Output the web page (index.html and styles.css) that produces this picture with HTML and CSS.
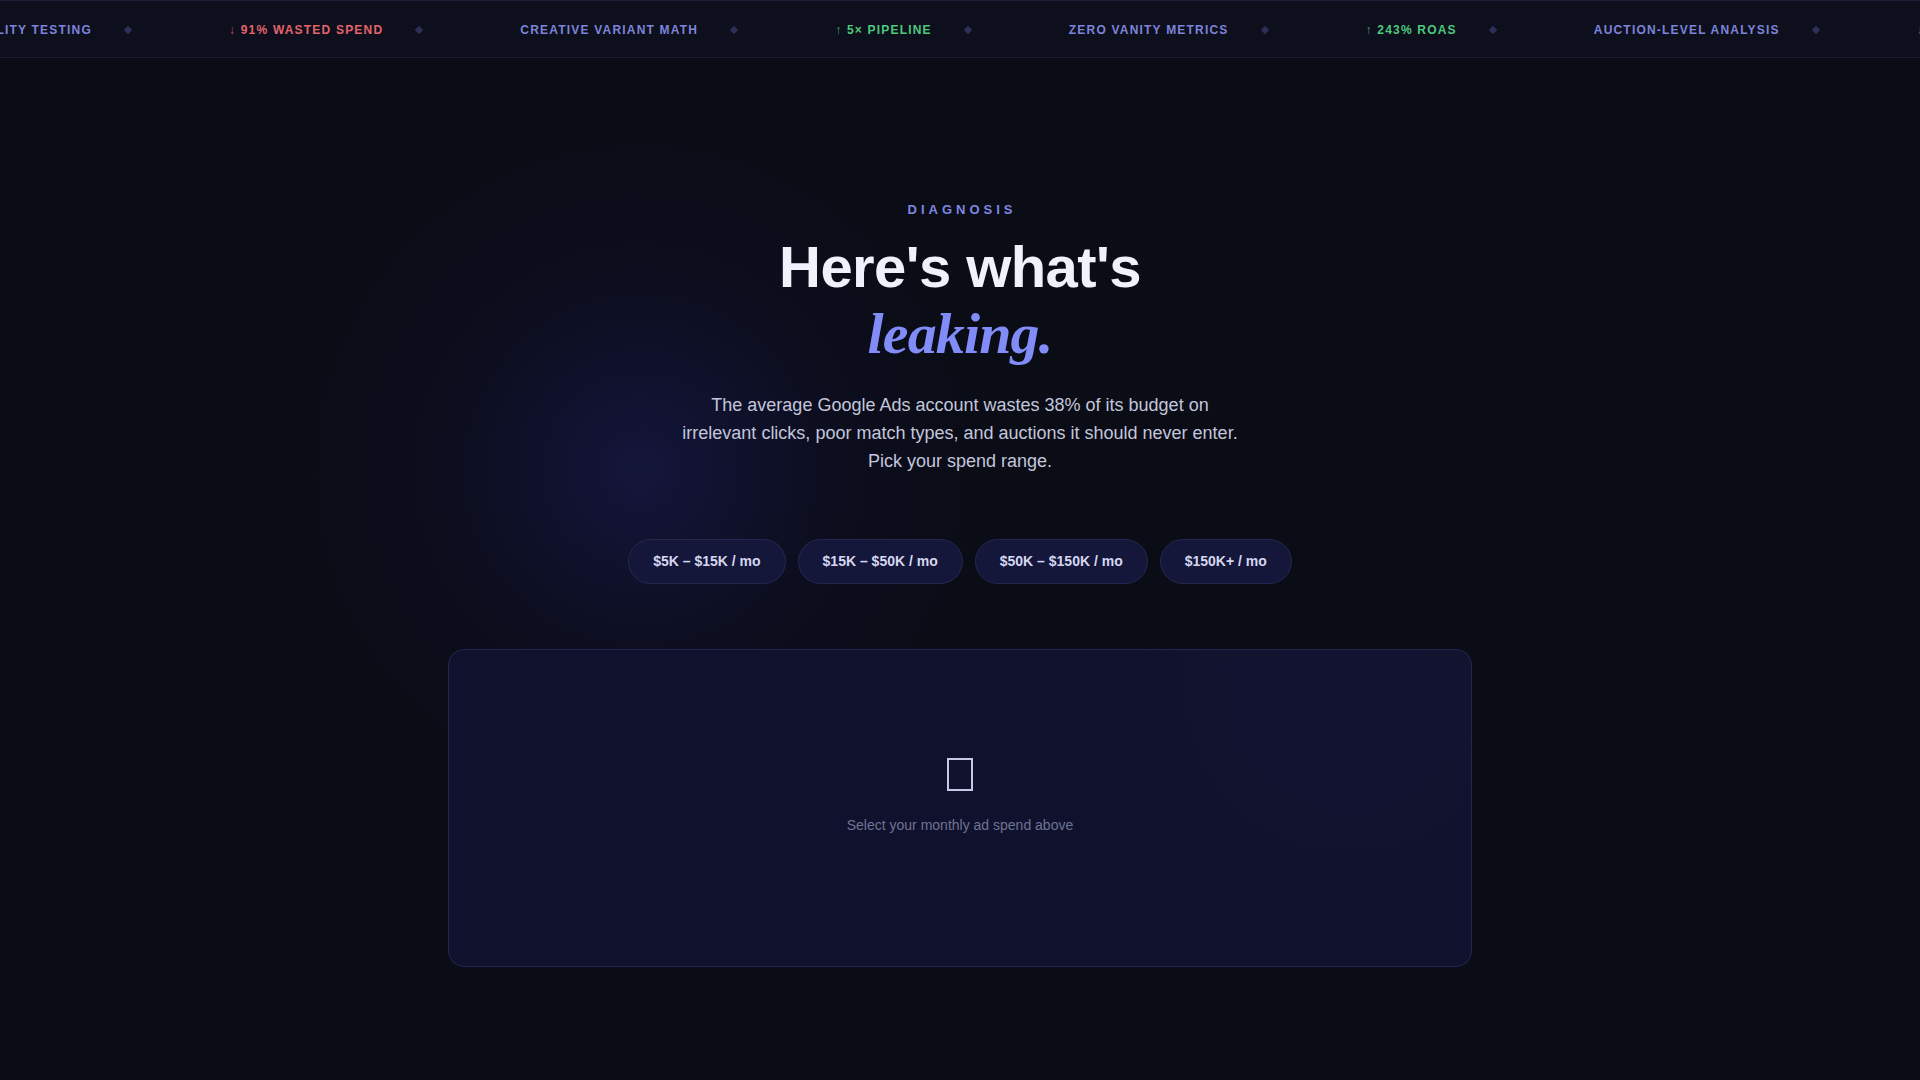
FILE: index.html
```html
<!DOCTYPE html>
<html lang="en">
<head>
<meta charset="utf-8">
<title>Diagnosis</title>
<link rel="stylesheet" href="styles.css">
</head>
<body>
<div class="ticker">
  <div class="track">
    <div class="item first"><span class="label indigo">QUALITY TESTING</span><span class="dot"></span></div>
    <div class="item"><span class="label red"><span class="arrow">↓</span> 91% WASTED SPEND</span><span class="dot"></span></div>
    <div class="item"><span class="label indigo">CREATIVE VARIANT MATH</span><span class="dot"></span></div>
    <div class="item"><span class="label green"><span class="arrow">↑</span> 5× PIPELINE</span><span class="dot"></span></div>
    <div class="item"><span class="label indigo">ZERO VANITY METRICS</span><span class="dot"></span></div>
    <div class="item"><span class="label green"><span class="arrow">↑</span> 243% ROAS</span><span class="dot"></span></div>
    <div class="item"><span class="label indigo">AUCTION-LEVEL ANALYSIS</span><span class="dot"></span></div>
    <div class="item"><span class="label red"><span class="arrow">↓</span> 38% BUDGET LEAK</span><span class="dot"></span></div>
  </div>
</div>

<main class="hero">
  <p class="eyebrow">DIAGNOSIS</p>
  <h1 class="title">Here's what's<br><em class="accent">leaking.</em></h1>
  <p class="lede">The average Google Ads account wastes 38% of its budget on irrelevant clicks, poor match types, and auctions it should never enter. Pick your spend range.</p>
  <div class="ranges">
    <button class="range">$5K – $15K / mo</button>
    <button class="range">$15K – $50K / mo</button>
    <button class="range">$50K – $150K / mo</button>
    <button class="range">$150K+ / mo</button>
  </div>
  <section class="result">
    <div class="tofu"></div>
    <p class="hint">Select your monthly ad spend above</p>
  </section>
</main>
</body>
</html>
```

FILE: styles.css
```css
html, body {
  margin: 0;
  padding: 0;
}
body {
  min-height: 1080px;
  background-color: #0a0c16;
  background-image: radial-gradient(circle at 640px 470px, rgba(34, 34, 110, 0.42) 0, rgba(22, 22, 70, 0.18) 190px, rgba(10, 12, 22, 0) 330px);
  font-family: "Liberation Sans", Arial, sans-serif;
  color: #e8e9f6;
}

/* ticker */
.ticker {
  height: 58px;
  box-sizing: border-box;
  padding-top: 2px;
  border-top: 1px solid #1b1d36;
  border-bottom: 1px solid #1c1e38;
  background: #0d0f1c;
  overflow: hidden;
  display: flex;
  align-items: center;
}
.track {
  display: flex;
  align-items: center;
  flex: none;
}
.item {
  display: flex;
  align-items: center;
  gap: 33px;
  padding: 0 49px;
  flex: none;
  white-space: nowrap;
}
.item.first {
  width: 180px;
  box-sizing: border-box;
  padding-left: 0;
  justify-content: flex-end;
}
.label {
  font-size: 12px;
  font-weight: 700;
  letter-spacing: 0.1em;
  line-height: 16px;
}
.indigo { color: #7d84db; }
.red { color: #e3646a; }
.green { color: #4cc97c; }
.arrow {
  font-weight: 400;
  opacity: 0.8;
}
.dot {
  width: 6px;
  height: 6px;
  background: #2c2f58;
  transform: rotate(45deg);
  flex: none;
}

/* hero */
.hero {
  padding: 144px 0 0;
  text-align: center;
}
.eyebrow {
  margin: 0 0 16px;
  padding-left: 4px;
  font-size: 13px;
  line-height: 16px;
  font-weight: 700;
  letter-spacing: 4px;
  color: #7f87e0;
}
.title {
  margin: 0;
  font-size: 58px;
  line-height: 66px;
  font-weight: 700;
  letter-spacing: -0.01em;
  color: #f1f1fb;
}
.accent {
  font-family: "Liberation Serif", "Times New Roman", serif;
  font-style: italic;
  font-weight: 700;
  letter-spacing: -0.015em;
  color: #818cf8;
}
.lede {
  margin: 24px auto 0;
  max-width: 568px;
  font-size: 18px;
  line-height: 28px;
  color: #c3c6dc;
}
.ranges {
  margin-top: 64px;
  display: flex;
  justify-content: center;
  gap: 12px;
}
.range {
  font-family: "Liberation Sans", Arial, sans-serif;
  font-size: 14px;
  line-height: 17px;
  font-weight: 700;
  padding: 13px 24px;
  border-radius: 999px;
  border: 1px solid #25274f;
  background: #14163a;
  color: #d5d7f0;
}

.result {
  width: 1024px;
  height: 318px;
  box-sizing: border-box;
  margin: 65px auto 0;
  padding-top: 108px;
  border: 1px solid #24264f;
  border-radius: 16px;
  background-color: #10122d;
  background-image: radial-gradient(circle at 88% 12%, rgba(30, 32, 80, 0.12), rgba(16, 18, 45, 0) 240px);
  display: flex;
  flex-direction: column;
  align-items: center;
}
.tofu {
  width: 26px;
  height: 33px;
  box-sizing: border-box;
  border: 2px solid #c6c9e6;
}
.hint {
  margin: 24px 0 0;
  font-size: 14px;
  line-height: 20px;
  color: #6e7294;
}
```
